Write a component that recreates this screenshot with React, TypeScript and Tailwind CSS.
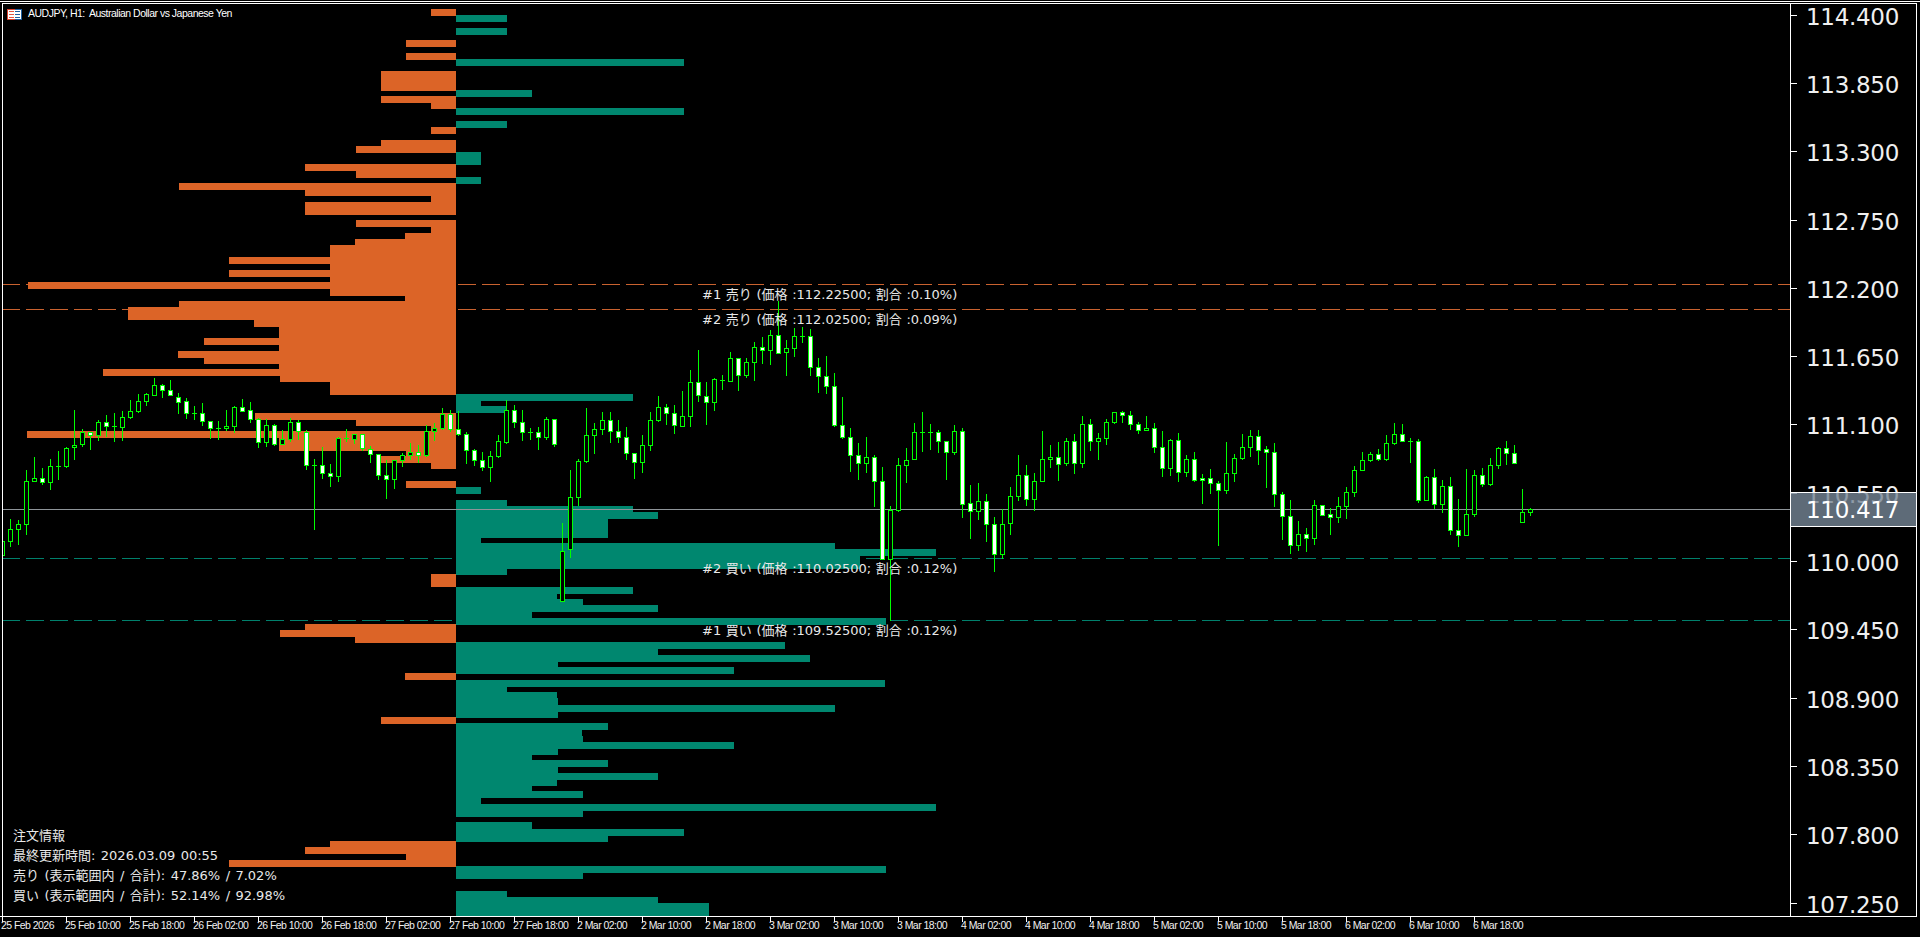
import React from 'react';

const ORANGE = '#dc6427';
const TEAL = '#00876f';
const GREEN = '#00ff00';

// sell profile: [top, bottom, left], every bar ends at x=456
const sellBars: [number, number, number][] = [
  [9, 16, 431], [40, 47, 406], [53, 60, 406], [71, 91, 381], [96, 103, 381], [103, 109, 431],
  [127, 134, 431], [140, 146, 381], [146, 153, 356], [164, 171, 305], [171, 178, 356],
  [183, 190, 179], [190, 196, 305], [196, 202, 431], [202, 215, 305], [220, 227, 356],
  [227, 233, 431], [233, 239, 405], [239, 245, 355], [245, 257, 330], [257, 264, 229],
  [264, 270, 330], [270, 277, 229], [277, 282, 330], [282, 289, 28], [289, 296, 330],
  [296, 301, 405], [301, 307, 179], [307, 320, 128], [320, 327, 254], [327, 338, 279],
  [338, 345, 204], [345, 351, 279], [351, 358, 178], [358, 364, 204], [364, 369, 279],
  [369, 376, 103], [376, 382, 280], [382, 395, 330], [413, 420, 255], [420, 426, 356],
  [426, 431, 431], [431, 438, 27], [438, 451, 279], [451, 456, 406], [456, 463, 381],
  [463, 469, 431], [481, 488, 406], [574, 587, 431], [624, 630, 305], [630, 637, 280],
  [637, 643, 355], [673, 680, 405], [717, 724, 381], [841, 847, 330], [847, 854, 305],
  [854, 860, 406], [860, 867, 229],
];

// buy profile: [top, bottom, right], every bar starts at x=456
const buyBars: [number, number, number][] = [
  [15, 22, 507], [28, 35, 507], [59, 66, 684], [90, 97, 532], [108, 115, 684], [121, 128, 507],
  [152, 165, 481], [177, 184, 481], [394, 401, 633], [401, 406, 481], [406, 413, 506],
  [487, 494, 481], [500, 506, 507], [506, 512, 633], [512, 519, 658], [519, 538, 608],
  [538, 543, 481], [543, 549, 835], [549, 556, 936], [556, 569, 860], [569, 575, 507],
  [587, 594, 633], [594, 599, 557], [599, 605, 583], [605, 612, 658], [612, 618, 532],
  [618, 625, 886], [642, 649, 785], [649, 655, 658], [655, 662, 810], [662, 667, 558],
  [667, 674, 734], [680, 687, 885], [687, 692, 507], [692, 698, 557], [698, 705, 558],
  [705, 712, 835], [712, 718, 558], [723, 730, 608], [730, 736, 582], [736, 742, 583],
  [742, 749, 734], [749, 755, 558], [755, 760, 532], [760, 767, 608], [767, 773, 558],
  [773, 780, 658], [780, 786, 557], [786, 791, 532], [791, 798, 583], [798, 804, 481],
  [804, 811, 936], [811, 817, 583], [822, 829, 532], [829, 836, 684], [836, 842, 608],
  [866, 873, 886], [873, 879, 583], [891, 897, 507], [897, 903, 658], [903, 916, 709],
];

// H1 candles, 8px apart from x=2: [wickTop, bodyTop, bodyBottom, wickBottom, white body]
// y values are in thirds of a pixel counted from y=300
const candles: [number, number, number, number, number][] = [
  [724, 724, 768, 768, 0], [657, 688, 725, 741, 0], [660, 673, 689, 735, 0], [510, 544, 674, 705, 0],
  [471, 535, 545, 545, 0], [504, 535, 549, 555, 1], [477, 499, 548, 570, 0], [453, 499, 499, 540, 0],
  [441, 445, 500, 504, 0], [330, 436, 443, 480, 0], [388, 397, 434, 441, 0], [396, 397, 407, 450, 1],
  [360, 367, 407, 423, 0], [345, 367, 380, 411, 1], [339, 380, 380, 426, 0], [333, 352, 383, 423, 0],
  [300, 334, 353, 357, 0], [282, 304, 335, 339, 0], [279, 283, 305, 318, 0], [234, 256, 287, 288, 0],
  [252, 256, 272, 294, 1], [240, 271, 287, 288, 1], [279, 292, 308, 342, 1], [294, 304, 341, 357, 1],
  [318, 340, 340, 360, 0], [309, 340, 365, 378, 1], [364, 364, 386, 417, 1], [363, 385, 385, 420, 0],
  [330, 379, 385, 393, 0], [318, 322, 380, 399, 0], [297, 322, 335, 336, 1], [306, 331, 359, 369, 1],
  [354, 358, 428, 444, 1], [359, 376, 428, 441, 0], [372, 376, 434, 438, 1], [390, 418, 434, 435, 0],
  [354, 367, 419, 426, 0], [360, 367, 394, 420, 1], [390, 397, 497, 510, 1], [477, 496, 496, 690, 0],
  [442, 496, 521, 537, 1], [492, 520, 530, 561, 1], [411, 415, 530, 546, 0], [387, 416, 416, 426, 0],
  [403, 403, 419, 432, 0], [402, 403, 445, 453, 1], [438, 448, 464, 489, 1], [463, 463, 527, 540, 1],
  [480, 526, 539, 597, 1], [480, 481, 539, 567, 0], [460, 466, 482, 501, 0], [430, 457, 467, 480, 0],
  [435, 457, 467, 489, 1], [376, 395, 467, 471, 0], [370, 385, 395, 423, 0], [324, 343, 386, 390, 0],
  [331, 343, 389, 396, 1], [333, 388, 404, 408, 1], [396, 403, 452, 492, 1], [447, 451, 482, 498, 1],
  [456, 481, 502, 513, 1], [453, 469, 503, 546, 0], [405, 424, 470, 474, 0], [300, 331, 427, 432, 0],
  [315, 331, 368, 384, 1], [330, 367, 397, 423, 1], [384, 397, 397, 420, 0], [381, 397, 412, 450, 1],
  [351, 358, 413, 420, 0], [357, 358, 434, 441, 1], [669, 754, 904, 906, 0], [510, 592, 748, 774, 0],
  [477, 484, 593, 618, 0], [324, 406, 485, 489, 0], [369, 388, 407, 462, 0], [336, 361, 388, 405, 0],
  [336, 361, 395, 429, 1], [360, 394, 412, 429, 1], [381, 412, 460, 480, 1], [460, 460, 488, 537, 1],
  [405, 436, 488, 519, 0], [336, 361, 437, 453, 0], [288, 322, 362, 366, 0], [312, 322, 340, 375, 1],
  [315, 340, 377, 402, 1], [273, 349, 380, 381, 0], [210, 247, 350, 381, 0], [150, 247, 287, 306, 1],
  [246, 289, 307, 375, 1], [234, 238, 307, 333, 0], [225, 241, 241, 270, 0], [156, 175, 245, 246, 0],
  [174, 175, 227, 273, 1], [174, 187, 227, 234, 0], [126, 142, 187, 243, 0], [111, 142, 152, 192, 1],
  [90, 106, 152, 195, 0], [3, 106, 160, 162, 1], [120, 145, 158, 228, 0], [84, 109, 146, 171, 0],
  [81, 109, 109, 127, 0], [87, 109, 202, 226, 1], [175, 202, 230, 279, 1], [168, 229, 260, 282, 1],
  [220, 259, 377, 381, 1], [291, 376, 412, 415, 1], [384, 412, 466, 516, 1], [429, 466, 490, 540, 1],
  [411, 472, 490, 519, 0], [466, 472, 544, 621, 1], [501, 544, 778, 780, 1], [618, 631, 778, 963, 0],
  [474, 496, 633, 636, 0], [444, 481, 496, 549, 0], [369, 397, 478, 480, 0], [336, 397, 397, 456, 0],
  [372, 397, 397, 450, 0], [390, 397, 424, 459, 1], [424, 424, 457, 540, 1], [375, 394, 458, 465, 0],
  [384, 394, 613, 654, 1], [555, 610, 634, 717, 1], [549, 604, 634, 660, 0], [582, 604, 673, 726, 1],
  [651, 673, 763, 816, 1], [628, 673, 763, 775, 0], [561, 589, 670, 705, 0], [465, 526, 590, 603, 0],
  [495, 526, 598, 618, 1], [519, 544, 598, 633, 0], [393, 479, 544, 545, 0], [435, 472, 478, 504, 0],
  [426, 472, 493, 543, 1], [415, 424, 490, 498, 0], [403, 424, 490, 522, 1], [348, 373, 490, 504, 0],
  [357, 373, 424, 453, 1], [399, 415, 424, 480, 0], [358, 367, 415, 435, 0], [336, 337, 367, 370, 0],
  [334, 337, 346, 369, 1], [334, 346, 373, 390, 1], [366, 373, 391, 402, 1], [348, 385, 391, 393, 0],
  [370, 385, 442, 459, 1], [393, 442, 505, 531, 1], [418, 421, 505, 528, 0], [400, 421, 517, 546, 1],
  [465, 478, 517, 531, 0], [456, 478, 541, 546, 1], [522, 535, 541, 612, 1], [507, 535, 550, 582, 1],
  [544, 550, 571, 738, 1], [426, 520, 571, 582, 0], [462, 475, 520, 546, 0], [402, 442, 475, 480, 0],
  [390, 409, 442, 471, 0], [390, 409, 451, 495, 1], [438, 448, 457, 564, 1], [429, 457, 583, 621, 1],
  [576, 583, 649, 720, 1], [600, 649, 736, 762, 1], [663, 703, 736, 753, 0], [684, 703, 715, 756, 1],
  [600, 616, 715, 735, 0], [616, 616, 646, 646, 1], [625, 643, 652, 705, 1], [591, 619, 652, 669, 0],
  [561, 577, 619, 657, 0], [498, 511, 577, 591, 0], [456, 481, 511, 513, 0], [456, 463, 481, 486, 0],
  [447, 463, 478, 483, 1], [405, 430, 478, 483, 0], [369, 403, 430, 435, 0], [372, 403, 424, 426, 1],
  [414, 424, 424, 489, 0], [417, 424, 601, 609, 1], [528, 532, 601, 603, 0], [507, 532, 613, 627, 1],
  [540, 559, 613, 639, 0], [531, 559, 691, 705, 1], [597, 691, 706, 741, 1], [507, 643, 706, 708, 0],
  [510, 526, 643, 651, 0], [504, 526, 553, 561, 1], [474, 496, 554, 558, 0], [442, 445, 496, 507, 0],
  [423, 445, 460, 495, 1], [435, 460, 490, 492, 1], [567, 637, 667, 668, 0], [625, 628, 637, 648, 0],
];

const priceLabels = [
  '114.400', '113.850', '113.300', '112.750', '112.200', '111.650', '111.100',
  '110.550', '110.000', '109.450', '108.900', '108.350', '107.800', '107.250',
];

const timeLabels = [
  '25 Feb 2026', '25 Feb 10:00', '25 Feb 18:00', '26 Feb 02:00', '26 Feb 10:00', '26 Feb 18:00',
  '27 Feb 02:00', '27 Feb 10:00', '27 Feb 18:00', '2 Mar 02:00', '2 Mar 10:00', '2 Mar 18:00',
  '3 Mar 02:00', '3 Mar 10:00', '3 Mar 18:00', '4 Mar 02:00', '4 Mar 10:00', '4 Mar 18:00',
  '5 Mar 02:00', '5 Mar 10:00', '5 Mar 18:00', '6 Mar 02:00', '6 Mar 10:00', '6 Mar 18:00',
];

const levelLabels = [
  { text: '#1 売り (価格 :112.22500; 割合 :0.10%)', top: 'top-[281px]' },
  { text: '#2 売り (価格 :112.02500; 割合 :0.09%)', top: 'top-[306px]' },
  { text: '#2 買い (価格 :110.02500; 割合 :0.12%)', top: 'top-[555px]' },
  { text: '#1 買い (価格 :109.52500; 割合 :0.12%)', top: 'top-[617px]' },
];

const infoLines = [
  '注文情報',
  '最終更新時間: 2026.03.09 00:55',
  '売り (表示範囲内 / 合計): 47.86% / 7.02%',
  '買い (表示範囲内 / 合計): 52.14% / 92.98%',
];

const toY = (v: number) => 300 + Math.floor(v / 3);
const toYEnd = (v: number) => 300 + Math.ceil(v / 3);

const Candle: React.FC<{ index: number; data: [number, number, number, number, number] }> = ({ index, data }) => {
  const [wickTop, bodyTop, bodyBottom, wickBottom, white] = data;
  const x = 2 + index * 8;
  const top = toY(bodyTop);
  const height = toYEnd(bodyBottom) - top;
  return (
    <g>
      <rect x={x} y={toY(wickTop)} width={1} height={toYEnd(wickBottom) - toY(wickTop)} fill={GREEN} />
      {bodyTop === bodyBottom ? (
        <rect x={x - 2} y={top} width={5} height={1} fill={GREEN} />
      ) : (
        <>
          <rect x={x - 2} y={top} width={5} height={height} fill={GREEN} />
          <rect x={x - 1} y={top + 1} width={3} height={Math.max(height - 2, 1)} fill={white ? '#ffffff' : '#000000'} />
        </>
      )}
    </g>
  );
};

const DashedLevel: React.FC<{ y: number; color: string }> = ({ y, color }) => (
  <line x1={2} x2={1790} y1={y + 0.5} y2={y + 0.5} stroke={color} strokeWidth={1} strokeDasharray="18 6" />
);

const ChartCanvas = () => (
  <svg
    className="absolute inset-0 block"
    width={1787}
    height={912}
    viewBox="3 4 1787 912"
    shapeRendering="crispEdges"
  >
    <DashedLevel y={284} color="#c9622f" />
    <DashedLevel y={309} color="#c9622f" />
    <DashedLevel y={558} color="#00806c" />
    <DashedLevel y={620} color="#00806c" />
    {sellBars.map(([top, bottom, left]) => (
      <rect key={`s${top}`} x={left} y={top} width={456 - left} height={bottom - top} fill={ORANGE} />
    ))}
    {buyBars.map(([top, bottom, right]) => (
      <rect key={`b${top}`} x={456} y={top} width={right - 456} height={bottom - top} fill={TEAL} />
    ))}
    <rect x={3} y={509} width={1787} height={1} fill="#8e9499" />
    {candles.map((c, i) => (
      <Candle key={i} index={i} data={c} />
    ))}
  </svg>
);

const SymbolIcon = () => (
  <svg width={15} height={11} viewBox="0 0 15 11" shapeRendering="crispEdges" className="block">
    <rect width={15} height={11} fill="#ffffff" />
    <rect width={8} height={1} fill="#d8402c" />
    <rect width={1} height={11} fill="#d8402c" />
    <rect y={10} width={8} height={1} fill="#d8402c" />
    <rect x={8} width={7} height={1} fill="#1f5f9f" />
    <rect x={14} width={1} height={11} fill="#1f5f9f" />
    <rect x={8} y={10} width={7} height={1} fill="#1f5f9f" />
    <rect x={2} y={2} width={5} height={1} fill="#e4553f" />
    <rect x={2} y={5} width={5} height={1} fill="#e4553f" />
    <rect x={2} y={8} width={5} height={1} fill="#e4553f" />
    <rect x={8} y={2} width={5} height={1} fill="#1f5f9f" />
    <rect x={8} y={5} width={5} height={1} fill="#1f5f9f" />
    <rect x={8} y={8} width={5} height={1} fill="#1f5f9f" />
  </svg>
);

const PriceAxis = () => (
  <div className="relative w-[126px] border-l border-white overflow-hidden">
    <div className="mt-[-23px]">
      {priceLabels.map((label) => (
        <div key={label} className="flex h-[68.3px] items-center">
          <div className="h-px w-[6px] bg-white" />
          <span className="ml-[9px] pt-[3px] font-['DejaVu_Sans',sans-serif] text-[23px] leading-[28px] tracking-[-0.3px] text-[#f0f0f0]">
            {label}
          </span>
        </div>
      ))}
    </div>
    {/* translucent tag: the 110.550 row shows through it */}
    <div className="absolute left-0 right-0 top-[488px] flex h-[35px] items-center border-y border-white bg-[#758696]/80 pl-[15px]">
      <span className="font-['DejaVu_Sans',sans-serif] text-[23px] leading-[28px] tracking-[-0.3px] text-white">
        110.417
      </span>
    </div>
  </div>
);

export default function App() {
  return (
    <div className="h-[937px] w-[1920px] overflow-hidden bg-black pt-px">
      <div className="h-px w-full bg-white" />
      <div className="ml-[2px] mt-px flex h-[913px] w-[1915px] border-x border-t border-white">
        <div className="relative w-[1787px]">
          <ChartCanvas />
          <div className="absolute left-[4px] top-[4px] flex h-[12px] items-center gap-[6px]">
            <SymbolIcon />
            <span className="whitespace-pre font-['Liberation_Sans',sans-serif] text-[10.5px] tracking-[-0.5px] text-white">
              AUDJPY, H1:  Australian Dollar vs Japanese Yen
            </span>
          </div>
          {levelLabels.map((level) => (
            <span
              key={level.text}
              className={`absolute left-[699px] whitespace-nowrap font-['DejaVu_Sans','Noto_Sans_CJK_JP',sans-serif] text-[13px] leading-[20px] text-[#e8e8e8] [word-spacing:0.5px] ${level.top}`}
            >
              {level.text}
            </span>
          ))}
          <div className="absolute bottom-[10px] left-[10px] flex flex-col font-['DejaVu_Sans','Noto_Sans_CJK_JP',sans-serif] text-[13px] leading-[20px] text-[#e8e8e8] [word-spacing:1.3px]">
            {infoLines.map((line) => (
              <span key={line} className="whitespace-nowrap">
                {line}
              </span>
            ))}
          </div>
        </div>
        <PriceAxis />
      </div>
      <div className="h-px w-[1917px] bg-white" />
      <div className="flex pl-[2px]">
        {timeLabels.map((label) => (
          <div key={label} className="w-[64px] shrink-0">
            <div className="h-[5px] w-px bg-white" />
            <div className="-ml-px -mt-[2px] whitespace-nowrap font-['Liberation_Sans',sans-serif] text-[10.5px] leading-[11px] tracking-[-0.55px] text-[#f0f0f0]">
              {label}
            </div>
          </div>
        ))}
      </div>
    </div>
  );
}
